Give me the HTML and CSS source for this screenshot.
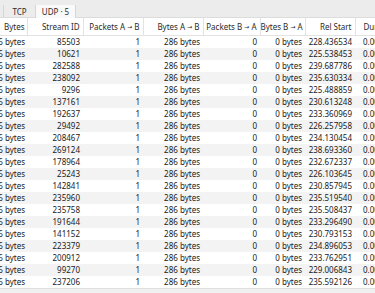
FILE: index.html
```html
<!DOCTYPE html>
<html>
<head>
	<title>Conversations</title>
	<link rel="stylesheet" href="styles.css">
</head>
<body>

<div class="tabbar">
	<div class="tab tab-prev"></div>
	<div class="tab tab-tcp">TCP</div>
	<div class="tab tab-on">UDP &middot; 5</div>
</div>

<div class="view">
<table class="conv">
	<colgroup>
		<col class="c-bytes">
		<col class="c-sid">
		<col class="c-pab">
		<col class="c-bab">
		<col class="c-pba">
		<col class="c-bba">
		<col class="c-rel">
		<col class="c-dur">
	</colgroup>
	<thead>
		<tr>
			<th>Bytes</th>
			<th>Stream ID</th>
			<th>Packets A <span class="arr">&rarr;</span> B</th>
			<th>Bytes A <span class="arr">&rarr;</span> B</th>
			<th>Packets B <span class="arr">&rarr;</span> A</th>
			<th>Bytes B <span class="arr">&rarr;</span> A</th>
			<th>Rel Start</th>
			<th class="left">Duration</th>
		</tr>
	</thead>
	<tbody id="rows"></tbody>
</table>
</div>

<div class="hscroll"></div>

<script>
	// stream id, rel start
	var data = [
		[85503, '228.436534'],
		[10621, '225.538453'],
		[282588, '239.687786'],
		[238092, '235.630334'],
		[9296, '225.488859'],
		[137161, '230.613248'],
		[192637, '233.360969'],
		[29492, '226.257958'],
		[208467, '234.130454'],
		[269124, '238.693360'],
		[178964, '232.672337'],
		[25243, '226.103645'],
		[142841, '230.857945'],
		[235960, '235.519540'],
		[235758, '235.508437'],
		[191644, '233.296490'],
		[141152, '230.793153'],
		[223379, '234.896053'],
		[200912, '233.762951'],
		[99270, '229.006843'],
		[237206, '235.592126']
	];
	var html = '';
	for (var i = 0; i < data.length; i++)
	{
		html += '<tr>' +
			'<td>286 bytes</td>' +
			'<td>' + data[i][0] + '</td>' +
			'<td>1</td>' +
			'<td>286 bytes</td>' +
			'<td>0</td>' +
			'<td>0 bytes</td>' +
			'<td>' + data[i][1] + '</td>' +
			'<td class="left">0.000000</td>' +
			'</tr>';
	}
	document.getElementById('rows').innerHTML = html;
</script>

</body>
</html>
```

FILE: styles.css
```css
body {
	margin: 0;
	width: 375px;
	height: 293px;
	overflow: hidden;
	background: #ffffff;
	font-family: "Noto Sans", "Open Sans", sans-serif;
	font-size: 8px;
	color: #1a1a1a;
}

/* tab strip */
.tabbar {
	display: flex;
	align-items: flex-end;
	height: 18px;
	background: #ececec;
	border-bottom: 1px solid #dcdcdc;
	box-sizing: border-box;
}

.tab {
	height: 13px;
	line-height: 13px;
	border-right: 1px solid #d6d6d6;
	color: #2a2a2a;
	margin-bottom: -1px;
	text-align: center;
}

.tab-prev {
	width: 3px;
}

.tab-tcp {
	width: 31px;
}

.tab-on {
	background: #f9f9f9;
	width: 39px;
}

/* table, scrolled sideways */
.view {
	overflow: hidden;
	height: 270px;
}

.conv {
	border-collapse: collapse;
	table-layout: fixed;
	margin-left: -30px;
	width: 440px;
	font-size: 8px;
}

.c-bytes { width: 57px; }
.c-sid { width: 56px; }
.c-pab { width: 60px; }
.c-bab { width: 60px; }
.c-pba { width: 57px; }
.c-bba { width: 45px; }
.c-rel { width: 50px; }
.c-dur { width: 55px; }

.conv th {
	font-weight: normal;
	height: 17px;
	padding: 0 3px 0 0;
	text-align: right;
	white-space: nowrap;
	overflow: hidden;
	border-right: 1px solid #e3e3e3;
	border-bottom: 1px solid #e3e3e3;
	color: #2a2a2a;
}

.arr {
	font-family: "DejaVu Sans", sans-serif;
	font-size: 6px;
	vertical-align: 1px;
}

.conv td {
	height: 12px;
	padding: 0 3px 0 0;
	text-align: right;
	white-space: nowrap;
	overflow: hidden;
	line-height: 12px;
}

.conv th:first-child,
.conv td:first-child {
	padding-right: 2px;
}

.conv th.left,
.conv td.left {
	text-align: left;
	padding: 0 0 0 8px;
}

.conv tbody tr:nth-child(even) {
	background: #f3f3f3;
}

.hscroll {
	height: 5px;
	border-top: 1px solid #e0e0e0;
	background: #f0f0f0;
}
```
